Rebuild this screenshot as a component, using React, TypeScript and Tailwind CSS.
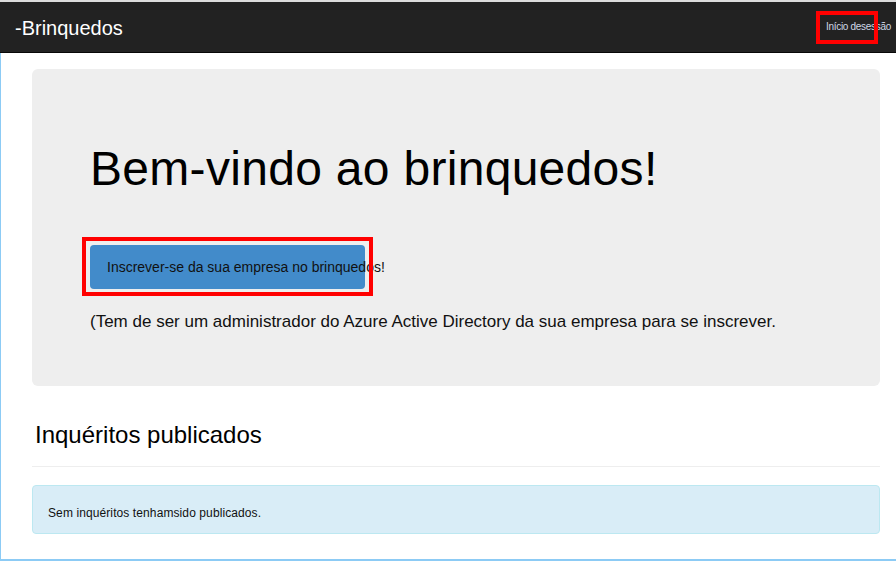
import React from 'react';

const font = { fontFamily: '"Liberation Sans", Arial, sans-serif' };

function Navbar() {
  return (
    <div className="relative">
      <div className="h-[2px] bg-[#dcdcdc]" />
      <div className="flex h-[51px] items-center justify-between border-b border-[#080808] bg-[#222222] pl-[15px] pr-[5px]">
        <span className="mt-[1px] text-[20px] text-white">-Brinquedos</span>
        <span className="mt-[-2px] text-[10px] tracking-[-0.3px] text-[#cfd8e6]">Início desessão</span>
      </div>
      {/* highlight box */}
      <div className="absolute left-[816px] top-[11px] h-[33px] w-[62px] border-4 border-[#ff0000]" />
    </div>
  );
}

export default function App() {
  return (
    <div className="min-h-[561px] w-[896px] bg-white" style={font}>
      <Navbar />
      <div className="h-[508px] border-b-2 border-l border-[#8ccbf5] pl-[31px] pt-[16px]">
        <div className="h-[317px] w-[848px] rounded-[6px] bg-[#eeeeee] pl-[58px] pt-[73px]">
          <h1 className="text-[48px] leading-[53px] tracking-[0.3px] text-black">Bem-vindo ao brinquedos!</h1>
          <div className="relative mt-[50px]">
            <div className="flex h-[44px] w-[275px] items-center rounded-[4px] bg-[#428bca] pl-[17px]">
              <span className="whitespace-nowrap text-[14px] text-[#111]">Inscrever-se da sua empresa no brinquedos!</span>
            </div>
            <div className="absolute left-[-8px] top-[-8px] h-[59px] w-[291px] border-4 border-[#ff0000]" />
          </div>
          <p className="mt-[21px] text-[17px] leading-[24px] text-[#111]">
            (Tem de ser um administrador do Azure Active Directory da sua empresa para se inscrever.
          </p>
        </div>
        <h2 className="mt-[36px] pl-[3px] text-[24px] leading-[26px] text-black">Inquéritos publicados</h2>
        <div className="mt-[18px] h-px w-[848px] bg-[#eeeeee]" />
        <div className="mt-[18px] h-[49px] w-[848px] rounded-[4px] border border-[#bce8f1] bg-[#d9edf7] pl-[15px] pt-[14px]">
          <span className="text-[12px] leading-[17px] tracking-[0.1px] text-[#111]">Sem inquéritos tenhamsido publicados.</span>
        </div>
      </div>
    </div>
  );
}
